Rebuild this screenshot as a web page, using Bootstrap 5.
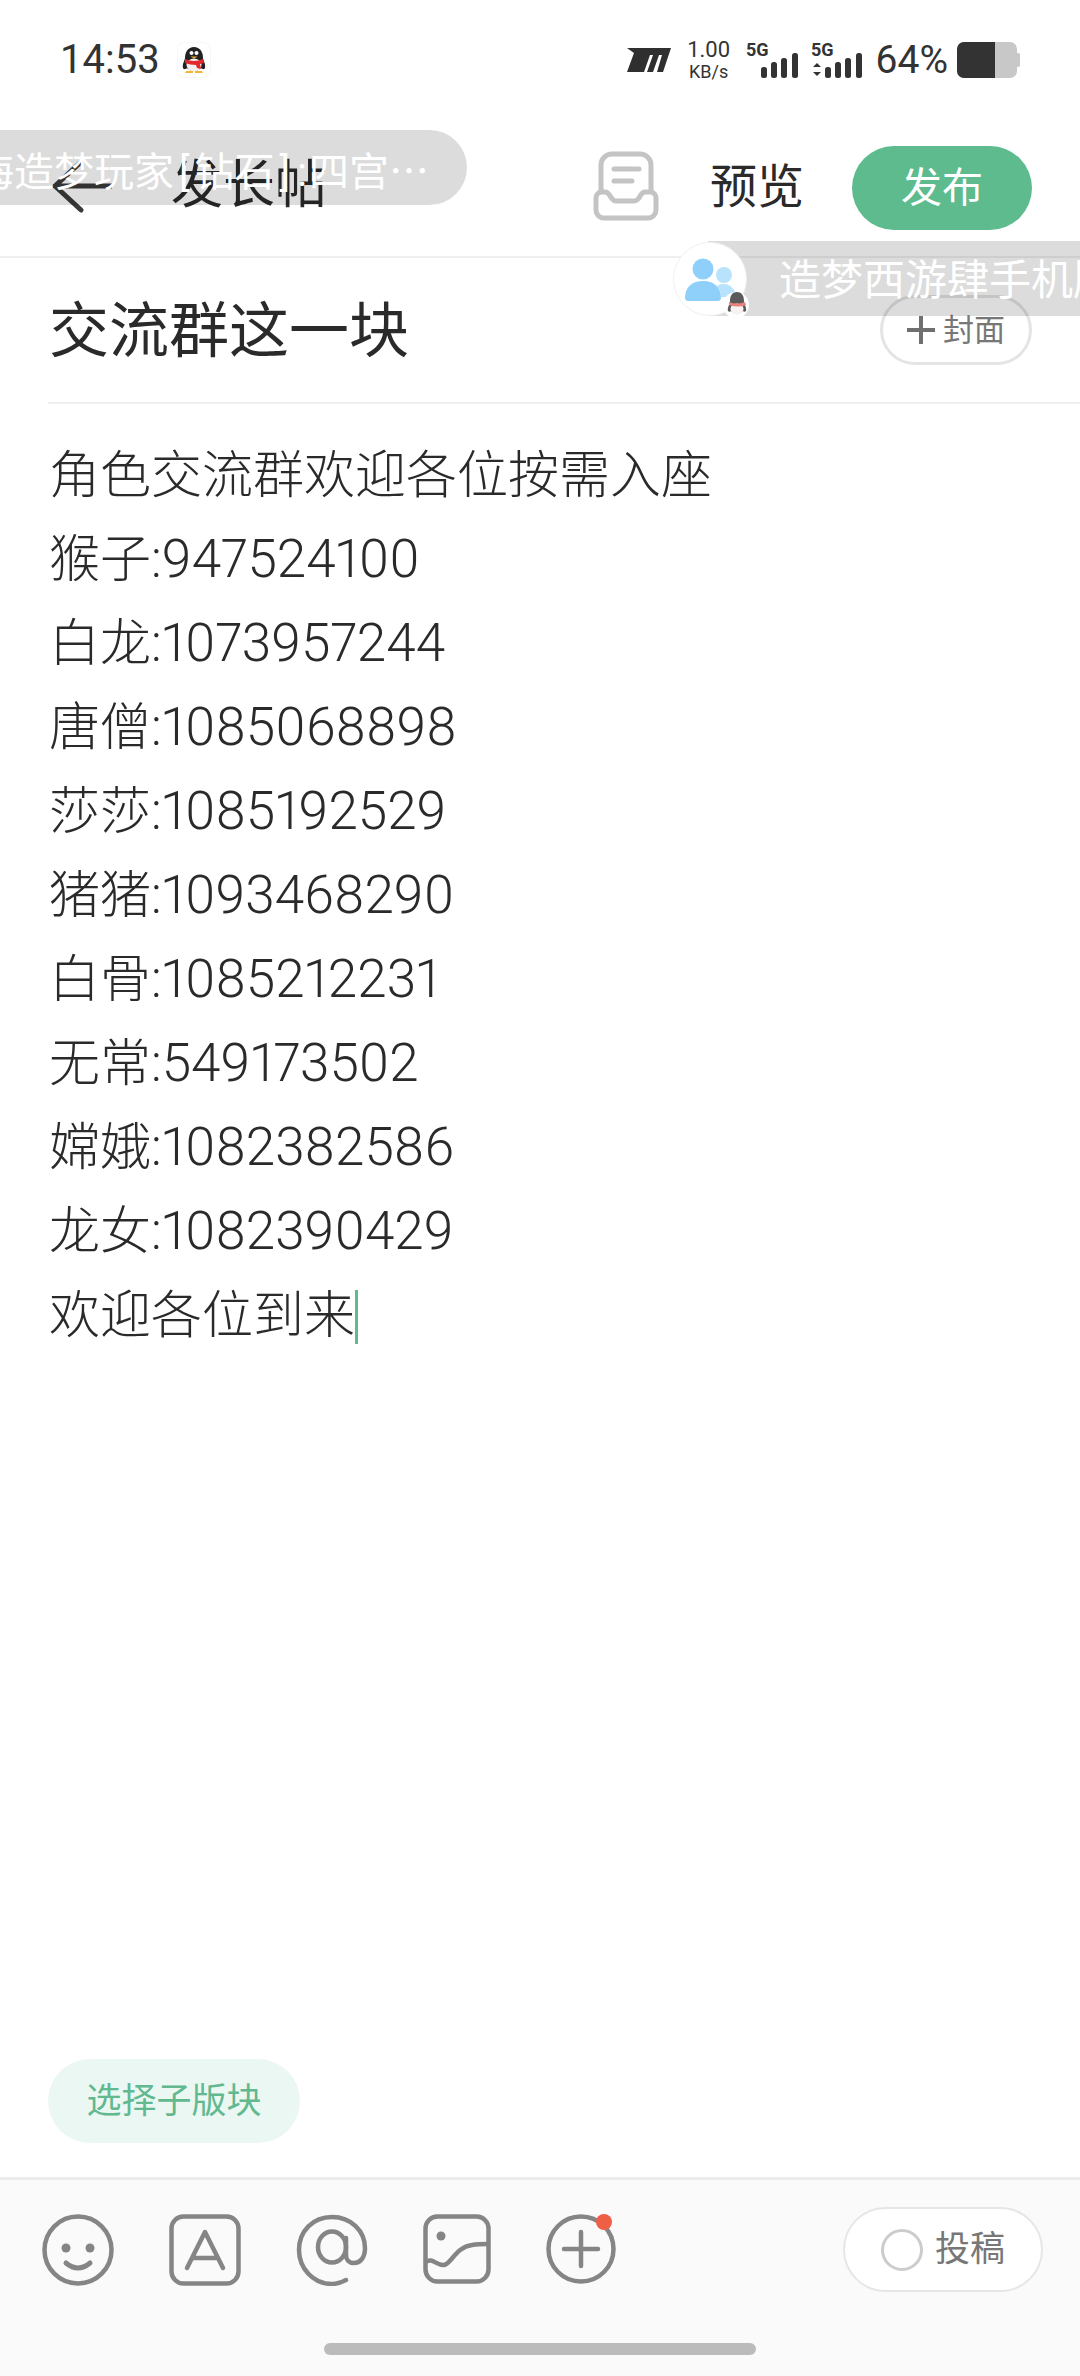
<!DOCTYPE html>
<html lang="zh-CN">
  <head>
    <meta charset="UTF-8" />
    <meta name="viewport" content="width=device-width, initial-scale=1.0" />
    <title>发长帖</title>
    <link
      href="https://cdn.jsdelivr.net/npm/bootstrap@5.3.3/dist/css/bootstrap.min.css"
      rel="stylesheet"
    />
    <style>
      body {
        width: 1080px;
        height: 2376px;
        overflow: hidden;
        background: #fff;
        color: #2a2a2a;
        font-family: Roboto, "Noto Sans CJK SC", sans-serif;
      }
      .page-wrap { width: 1080px; height: 2376px; }

      .status-row { height: 120px; padding: 0 60px 0 60px; color: #333; }
      .clock-text { font-size: 40px; line-height: 1; margin-right: 17px; }
      .speed-box { width: 44px; margin: 0 15px 0 16px; text-align: center; line-height: 1; }
      .speed-num { font-size: 22px; }
      .speed-unit { font-size: 18px; margin-top: 2px; }
      .battery-num { font-size: 39px; line-height: 1; margin: 0 9px 0 10px; }

      .head-row { height: 138px; border-bottom: 2px solid #efefef; padding: 0 48px 4px 52px; }
      .head-title { font-size: 52px; line-height: 1; margin-left: 59px; }
      .preview-text { font-size: 47px; line-height: 1; margin: 0 48px 0 51px; }
      .publish-btn {
        width: 180px;
        height: 84px;
        padding: 0;
        border: 0;
        background: #5dbb8e;
        color: #fff;
        font-size: 41px;
        line-height: 1;
        margin-top: 4px;
      }
      .publish-btn:hover { background: #5dbb8e; color: #fff; }

      .title-row { height: 146px; margin-left: 48px; border-bottom: 2px solid #efefef; padding: 0 48px 0 1px; }
      .title-text { font-size: 60px; line-height: 1; padding-top: 4px; }
      .cover-btn {
        width: 152px;
        height: 70px;
        padding: 0;
        background: #fff;
        border: 3px solid #e4e4e4;
        color: #777;
        font-size: 31px;
        line-height: 1;
      }

      .post-body { padding: 30px 0 0 49px; font-size: 51px; line-height: 84px; font-weight: 300; font-variant-numeric: proportional-nums; }
      .digit-run { font-size: 53px; line-height: 0; }
      .caret-line { display: inline-block; width: 3px; height: 54px; background: #5dbb8e; vertical-align: -11px; }

      .sub-row { padding: 0 0 34px 48px; }
      .sub-pill {
        display: inline-block;
        width: 252px;
        height: 84px;
        line-height: 86px;
        padding: 0;
        border: 0;
        background: #ebf7f2;
        color: #62b88f;
        font-size: 35px;
      }

      .tool-row {
        height: 199px;
        background: #fafafa;
        border-top: 3px solid #ececec;
        padding: 27px 37px 0 42px;
      }
      .tool-icons { gap: 55px; margin-top: 7px; }
      .tool-icons svg { display: block; }
      .submit-btn {
        width: 200px;
        height: 85px;
        padding: 0;
        background: #fff;
        border: 2px solid #e6e6e6;
        color: #777;
        font-size: 35px;
        line-height: 1;
      }
      .radio-ring { width: 42px; height: 42px; border: 3px solid #ccc; border-radius: 50%; margin-right: 12px; }
      .home-bar { position: absolute; left: 324px; top: 2343px; width: 432px; height: 12px; border-radius: 6px; background: #bbb; }

      /* floating danmaku pills lying over the page */
      .float-pill {
        position: absolute;
        height: 75px;
        background: rgba(0, 0, 0, 0.137);
        color: #fff;
        font-size: 40px;
        line-height: 79px;
        white-space: nowrap;
        overflow: hidden;
      }
      .float-left { left: 0; top: 130px; width: 467px; border-radius: 0 38px 38px 0; }
      .float-left > span { margin-left: -26px; }
      .mark-wide { margin: 0 5px; }
      .mark-colon { margin: 0 2px; }
      .dots-cjk { font-family: "Noto Sans CJK SC", sans-serif; }
      .float-right { left: 708px; top: 241px; width: 372px; padding-left: 71px; font-size: 42px; }
      .float-avatar { position: absolute; left: 673px; top: 242px; }
    </style>
  </head>
  <body>
    <div class="page-wrap d-flex flex-column position-relative">
      <!-- status bar -->
      <div class="status-row d-flex align-items-center flex-shrink-0">
        <span class="clock-text">14:53</span>
        <svg width="34" height="36" viewBox="0 0 34 36">
          <rect x="0.5" y="0.5" width="33" height="35" rx="7" fill="#fff" stroke="#f6f6f6" />
          <path d="M17 5c6 0 9 5 9 11 0 2 3 6 2 10-1 2-3 1-4 0-2 2-4 3-7 3s-5-1-7-3c-1 1-3 2-4 0-1-4 2-8 2-10 0-6 3-11 9-11z" fill="#222" />
          <ellipse cx="17" cy="23" rx="7.500" ry="6.500" fill="#f6eeee" />
          <path d="M8 17q9 4 18 0l1 4q-3 1-4 1l1 5-4-1-1-3q-6 0-11-2z" fill="#e0282e" />
          <circle cx="14.500" cy="11" r="2" fill="#fff" />
          <circle cx="19.500" cy="11" r="2" fill="#fff" />
          <path d="M13.500 14.500h7l-3.500 2z" fill="#f2b632" />
          <path d="M9 29h7v2H8zM18 29h7l1 2h-8z" fill="#f2b632" />
        </svg>
        <svg class="ms-auto" width="44" height="24" viewBox="0 0 44 24">
          <path d="M0 0h44l-8 24h-6l5-17h-3l-6 17h-6l6-17h-3l-6 17H0L7 5z" fill="#2f2f2f" />
        </svg>
        <div class="speed-box">
          <div class="speed-num">1.00</div>
          <div class="speed-unit">KB/s</div>
        </div>
        <svg width="120" height="38" viewBox="0 0 120 38">
          <text x="0" y="15" font-family="Roboto" font-weight="700" font-size="18" fill="#333">5G</text>
          <rect x="15" y="26" width="6" height="11" rx="2.500" fill="#333" />
          <rect x="25" y="21" width="6" height="16" rx="2.500" fill="#333" />
          <rect x="35" y="17" width="6" height="20" rx="2.500" fill="#333" />
          <rect x="46" y="12" width="6" height="25" rx="2.500" fill="#333" />
          <text x="65" y="15" font-family="Roboto" font-weight="700" font-size="18" fill="#333">5G</text>
          <path d="M67 26l4-4 4 4zM67 31l4 4 4-4z" fill="#333" />
          <rect x="79" y="26" width="6" height="11" rx="2.500" fill="#333" />
          <rect x="89" y="21" width="6" height="16" rx="2.500" fill="#333" />
          <rect x="99" y="17" width="6" height="20" rx="2.500" fill="#333" />
          <rect x="110" y="12" width="6" height="25" rx="2.500" fill="#333" />
        </svg>
        <span class="battery-num">64%</span>
        <svg width="63" height="36" viewBox="0 0 63 36">
          <rect x="0" y="0" width="60" height="36" rx="7" fill="#c8c8c8" />
          <path d="M7 0h31v36H7a7 7 0 0 1-7-7V7a7 7 0 0 1 7-7z" fill="#333" />
          <path d="M60 11h1a2 2 0 0 1 2 2v10a2 2 0 0 1-2 2h-1z" fill="#c8c8c8" />
        </svg>
      </div>

      <!-- header -->
      <div class="head-row d-flex align-items-center flex-shrink-0">
        <svg width="60" height="54" viewBox="0 0 60 54">
          <path d="M29 3L3 27l26 24M3 27h57" fill="none" stroke="#3a3a3a" stroke-width="5" stroke-linecap="round" stroke-linejoin="round" />
        </svg>
        <span class="head-title">发长帖</span>
        <svg class="ms-auto" width="66" height="70" viewBox="0 0 66 70">
          <g fill="none" stroke="#c4c4c4" stroke-width="5" stroke-linecap="round" stroke-linejoin="round">
            <path d="M8 40V14A11 11 0 0 1 19 3h28a11 11 0 0 1 11 11v26" />
            <path d="M12 41H8a6 6 0 0 0-5 6v12a8 8 0 0 0 8 8h44a8 8 0 0 0 8-8V47a6 6 0 0 0-5-6h-6c-6 0-4 9-11 9H23c-6 0-5-9-11-9z" />
            <path d="M21 18h25M21 30h18" />
          </g>
        </svg>
        <span class="preview-text">预览</span>
        <button class="btn rounded-pill publish-btn">发布</button>
      </div>

      <!-- title -->
      <div class="title-row d-flex align-items-center justify-content-between flex-shrink-0">
        <span class="title-text">交流群这一块</span>
        <button class="btn rounded-pill cover-btn d-flex align-items-center justify-content-center gap-2">
          <svg width="28" height="28" viewBox="0 0 28 28">
            <path d="M0 14h28M14 0v28" stroke="#6f6f6f" stroke-width="4" />
          </svg>
          <span>封面</span>
        </button>
      </div>

      <!-- post text -->
      <div class="post-body flex-grow-1">
        <div>角色交流群欢迎各位按需入座</div>
        <div>猴子:<span class="digit-run">947524100</span></div>
        <div>白龙:<span class="digit-run">1073957244</span></div>
        <div>唐僧:<span class="digit-run">1085068898</span></div>
        <div>莎莎:<span class="digit-run">1085192529</span></div>
        <div>猪猪:<span class="digit-run">1093468290</span></div>
        <div>白骨:<span class="digit-run">1085212231</span></div>
        <div>无常:<span class="digit-run">549173502</span></div>
        <div>嫦娥:<span class="digit-run">1082382586</span></div>
        <div>龙女:<span class="digit-run">1082390429</span></div>
        <div>欢迎各位到来<span class="caret-line"></span></div>
      </div>

      <div class="sub-row flex-shrink-0">
        <button class="btn rounded-pill sub-pill">选择子版块</button>
      </div>

      <!-- bottom toolbar -->
      <div class="tool-row d-flex justify-content-between flex-shrink-0">
        <div class="tool-icons d-flex align-items-start">
          <svg width="72" height="72" viewBox="0 0 72 72">
            <g fill="none" stroke="#858585" stroke-width="4.500" stroke-linecap="round">
              <circle cx="36" cy="36" r="33.500" />
              <path d="M24 49q12 10 24 0" stroke-width="5" />
            </g>
            <circle cx="24" cy="34" r="4.500" fill="#858585" />
            <circle cx="48" cy="34" r="4.500" fill="#858585" />
          </svg>
          <svg width="72" height="72" viewBox="0 0 72 72">
            <g fill="none" stroke="#858585" stroke-width="4.500" stroke-linecap="round" stroke-linejoin="round">
              <rect x="2.500" y="2.500" width="67" height="67" rx="12" />
              <path d="M18 54L36 18l18 36M23 44h26" />
            </g>
          </svg>
          <svg width="72" height="72" viewBox="0 0 72 72">
            <g fill="none" stroke="#858585" stroke-width="4.500" stroke-linecap="round">
              <path d="M50 66C44 69 40 70 36 70 17 70 3 54 3 36 3 17 17 3 36 3c19 0 33 14 33 31 0 10-5 15-11 15-5 0-8-3-8-8V24" />
              <ellipse cx="36" cy="33" rx="14" ry="15.500" />
            </g>
          </svg>
          <svg width="68" height="70" viewBox="0 0 68 70">
            <g fill="none" stroke="#858585" stroke-width="4.500" stroke-linecap="round">
              <rect x="2.500" y="2.500" width="63" height="65" rx="12" />
              <path d="M3 48c6-5 11 4 18 3 7-1 12-18 28-20 6-1 12-1 16-1" />
            </g>
            <circle cx="18" cy="22" r="4.500" fill="#858585" />
          </svg>
          <svg width="70" height="70" viewBox="0 0 70 70">
            <g fill="none" stroke="#858585" stroke-width="4.500" stroke-linecap="round">
              <circle cx="35" cy="35" r="32.500" />
              <path d="M18 35h34M35 18v34" />
            </g>
            <circle cx="58" cy="8" r="8" fill="#ee5f45" />
          </svg>
        </div>
        <button class="btn rounded-pill submit-btn d-flex align-items-center justify-content-center mt-0">
          <span class="radio-ring"></span>
          <span>投稿</span>
        </button>
      </div>
      <div class="home-bar"></div>

      <!-- overlays -->
      <div class="float-pill float-left"><span>海造梦玩家<span class="mark-wide">[</span>钻石<span class="mark-wide">]</span><span class="mark-colon">:</span>四宫<span class="dots-cjk">…</span></span></div>
      <div class="float-pill float-right">造梦西游肆手机版</div>
      <svg class="float-avatar" width="76" height="76" viewBox="0 0 76 76">
        <circle cx="37" cy="37" r="36.500" fill="#fff" stroke="#f0f0f0" />
        <circle cx="51" cy="33" r="8" fill="#b9e3fd" />
        <path d="M44 44c3-2 5-2 7-2 6 0 11 5 13 13H48c0-4-1-8-4-11z" fill="#b9e3fd" />
        <circle cx="30" cy="27" r="10.500" fill="#8fd0fb" />
        <path d="M12 56c0-11 7-17 18-17s18 6 18 17c0 1-1 3-3 3H15c-2 0-3-2-3-3z" fill="#8fd0fb" />
        <circle cx="63" cy="63" r="13" fill="#fff" />
        <path d="M64 50c5 0 7 4 7 9 0 3 3 7 2 10-1 1-2 1-3 0-2 3-10 3-12 0-1 1-2 1-3 0-1-3 2-7 2-10 0-5 2-9 7-9z" fill="#5a5a5a" />
        <ellipse cx="64" cy="67" rx="6.500" ry="5.500" fill="#f8f2f2" />
        <path d="M56 60q8 3 16 0l1 3q-8 3-17 0z" fill="#e8837f" />
      </svg>
    </div>
  </body>
</html>
